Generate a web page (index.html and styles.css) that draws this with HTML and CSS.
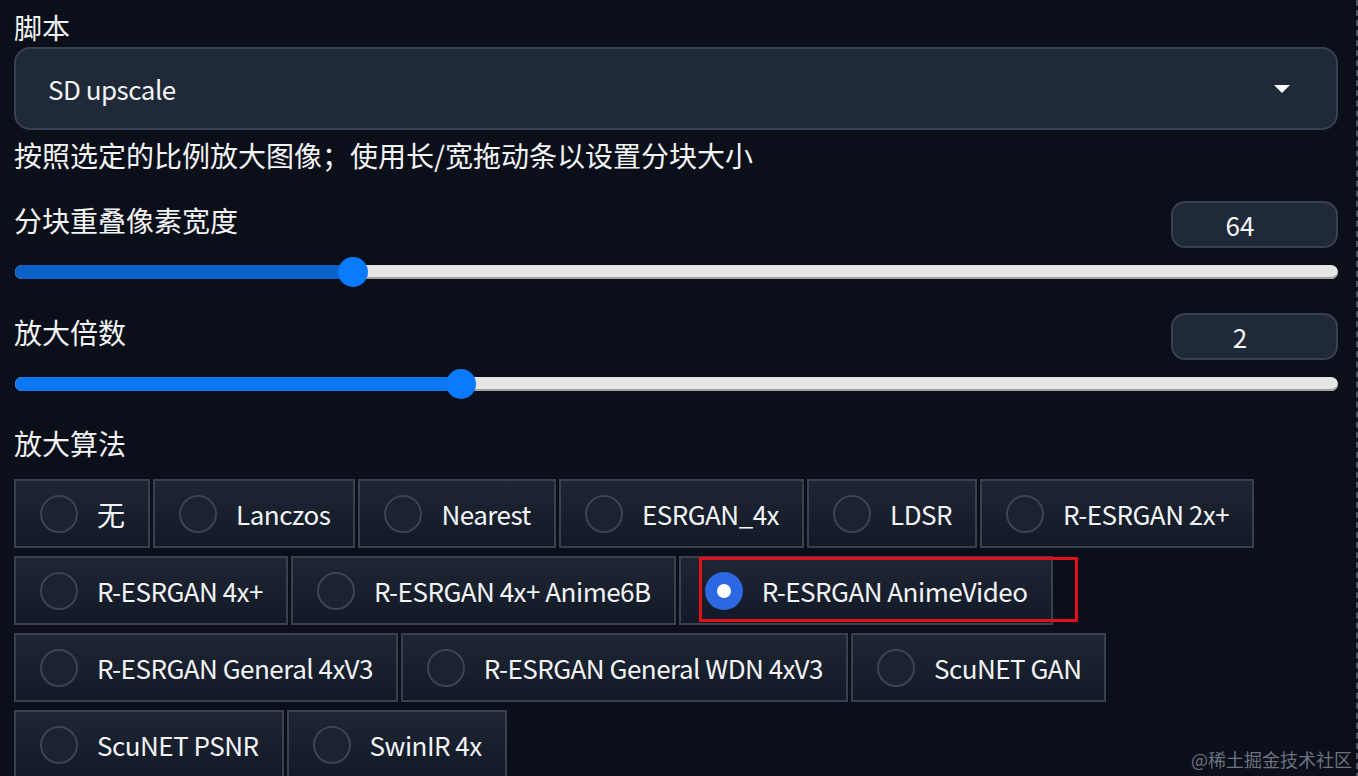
FILE: index.html
```html
<!DOCTYPE html>
<html lang="zh-CN">
<head>
    <meta charset="UTF-8">
    <meta name="viewport" content="width=device-width, initial-scale=1.0">
    <title>SD upscale</title>
    <link rel="stylesheet" href="styles.css">
</head>
<body>
    <div class="panel">
        <div class="label script-label">脚本</div>
        <div class="dropdown">
            <span class="latin">SD upscale</span>
            <span class="arrow"></span>
        </div>
        <p class="desc">按照选定的比例放大图像；使用长/宽拖动条以设置分块大小</p>

        <div class="slider-block first">
            <div class="slider-head">
                <span class="label">分块重叠像素宽度</span>
                <div class="num-box">64</div>
            </div>
            <div class="track">
                <div class="fill dark" style="width: 338px"></div>
                <div class="thumb" style="left: 323px"></div>
            </div>
        </div>

        <div class="slider-block">
            <div class="slider-head">
                <span class="label">放大倍数</span>
                <div class="num-box">2</div>
            </div>
            <div class="track">
                <div class="fill" style="width: 446px"></div>
                <div class="thumb" style="left: 431px"></div>
            </div>
        </div>

        <div class="label algo-label">放大算法</div>
        <div class="radio-group">
            <label class="radio"><span class="dot"></span><span class="cjk">无</span></label>
            <label class="radio"><span class="dot"></span>Lanczos</label>
            <label class="radio"><span class="dot"></span>Nearest</label>
            <label class="radio"><span class="dot"></span>ESRGAN_4x</label>
            <label class="radio"><span class="dot"></span>LDSR</label>
            <label class="radio"><span class="dot"></span>R-ESRGAN 2x+</label>
            <label class="radio"><span class="dot"></span>R-ESRGAN 4x+</label>
            <label class="radio"><span class="dot"></span>R-ESRGAN 4x+ Anime6B</label>
            <label class="radio selected"><span class="dot"></span>R-ESRGAN AnimeVideo<span class="highlight"></span></label>
            <label class="radio"><span class="dot"></span>R-ESRGAN General 4xV3</label>
            <label class="radio"><span class="dot"></span>R-ESRGAN General WDN 4xV3</label>
            <label class="radio"><span class="dot"></span>ScuNET GAN</label>
            <label class="radio"><span class="dot"></span>ScuNET PSNR</label>
            <label class="radio"><span class="dot"></span>SwinIR 4x</label>
        </div>
    </div>
    <div class="watermark">@稀土掘金技术社区</div>
</body>
</html>
```
FILE: styles.css
```css
body {
    margin: 0;
    padding: 0 0 0 14px;
    background-color: #0b0f19;
    color: #f3f4f6;
    font-family: "Noto Sans CJK SC", "Noto Sans", sans-serif;
    font-size: 28px;
    line-height: 34px;
    height: 776px;
    overflow: hidden;
    position: relative;
}
.panel {
    padding-right: 18px;
    border-right: 2px dashed #4b5563;
    min-height: 776px;
}
.label {
    display: block;
}
.latin {
    font-size: 26px;
    letter-spacing: -0.5px;
}
.script-label {
    padding-top: 10px;
    margin-bottom: 3px;
}
.dropdown {
    display: flex;
    justify-content: space-between;
    align-items: center;
    height: 79px;
    padding: 0 46px 0 32px;
    background-color: #1f2937;
    border: 2px solid #374151;
    border-radius: 16px;
}
.arrow {
    width: 0;
    height: 0;
    border-left: 8px solid transparent;
    border-right: 8px solid transparent;
    border-top: 8px solid #f9fafb;
}
.desc {
    margin: 8px 0 0 0;
}
.slider-block {
    margin-top: 34px;
}
.slider-block.first {
    margin-top: 29px;
}
.slider-head {
    display: flex;
    justify-content: space-between;
    align-items: flex-start;
}
.slider-head .label {
    margin-top: 2px;
}
.num-box {
    width: 134px;
    height: 43px;
    padding-right: 29px;
    line-height: 43px;
    font-size: 26px;
    text-align: center;
    background-color: #1f2937;
    border: 2px solid #374151;
    border-radius: 14px;
}
.track {
    position: relative;
    margin: 17px 0 0 1px;
    height: 14px;
    border-radius: 7px;
    background-color: #e5e5e5;
    box-shadow: inset 0 -2px 0 #a3a3a3;
}
.fill {
    height: 14px;
    border-radius: 7px;
    background-color: #0a78f5;
}
.fill.dark {
    background-color: #0a62c9;
}
.thumb {
    position: absolute;
    top: -8px;
    width: 30px;
    height: 30px;
    border-radius: 50%;
    background-color: #0a7bff;
}
.algo-label {
    margin-top: 35px;
}
.radio-group {
    display: flex;
    flex-wrap: wrap;
    gap: 8px 3px;
    margin-top: 19px;
}
.radio {
    position: relative;
    display: flex;
    align-items: center;
    height: 65px;
    padding: 0 23px 0 24px;
    font-size: 26px;
    letter-spacing: -0.5px;
    background: linear-gradient(to bottom, #1e2533, #131a27);
    border: 2px solid #394150;
}
.radio .cjk {
    font-size: 28px;
    letter-spacing: 0;
}
.dot {
    box-sizing: border-box;
    width: 38px;
    height: 38px;
    margin-right: 19px;
    border-radius: 50%;
    border: 2px solid #3b4452;
    background-color: #1b2230;
}
.selected .dot {
    border: none;
    background-color: #2d68e3;
    position: relative;
}
.selected .dot::after {
    content: '';
    position: absolute;
    top: 12px;
    left: 12px;
    width: 14px;
    height: 14px;
    border-radius: 50%;
    background-color: #fff;
}
.highlight {
    position: absolute;
    left: 18px;
    top: -1px;
    width: 373px;
    height: 59px;
    border: 3px solid #e3101b;
}
.watermark {
    position: absolute;
    right: 6px;
    bottom: 6px;
    font-size: 18px;
    line-height: 22px;
    color: #6b7280;
}
```
